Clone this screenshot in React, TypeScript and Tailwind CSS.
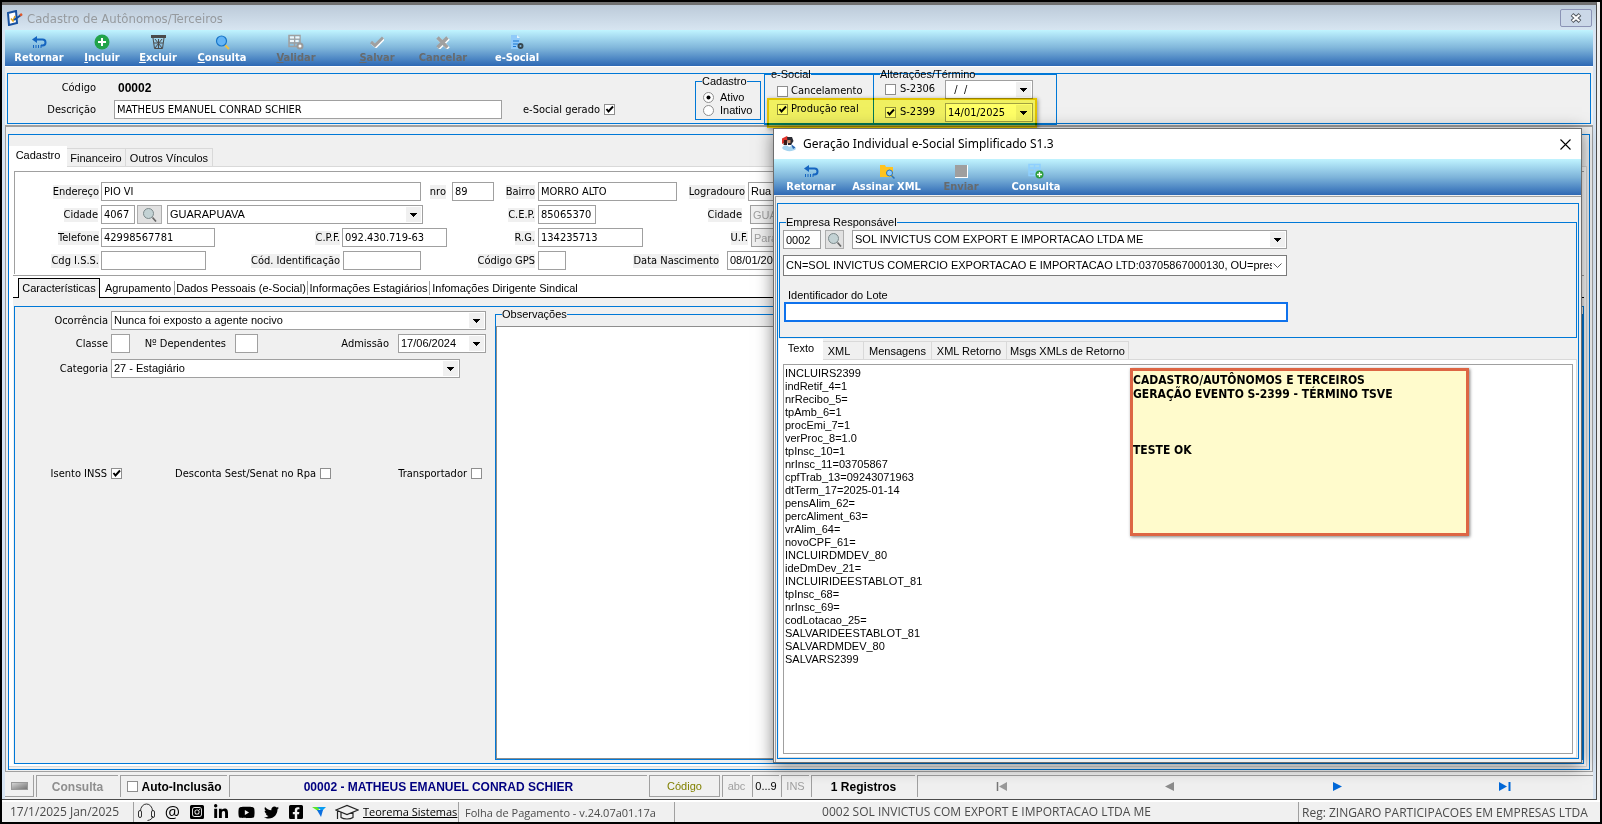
import type { ReactNode } from "react";
import { FaFacebookSquare, FaInstagramSquare, FaLinkedinIn, FaTwitter, FaYoutube } from "react-icons/fa";

const box = "h-[19px] shrink-0 border border-[#a0a0a0] bg-white px-[2px] leading-[15px] outline-none";
const ms = "font-['Liberation_Sans',Arial,sans-serif]";

const loteLines = [
  "INCLUIRS2399",
  "indRetif_4=1",
  "nrRecibo_5=",
  "tpAmb_6=1",
  "procEmi_7=1",
  "verProc_8=1.0",
  "tpInsc_10=1",
  "nrInsc_11=03705867",
  "cpfTrab_13=09243071963",
  "dtTerm_17=2025-01-14",
  "pensAlim_62=",
  "percAliment_63=",
  "vrAlim_64=",
  "novoCPF_61=",
  "INCLUIRDMDEV_80",
  "ideDmDev_21=",
  "INCLUIRIDEESTABLOT_81",
  "tpInsc_68=",
  "nrInsc_69=",
  "codLotacao_25=",
  "SALVARIDEESTABLOT_81",
  "SALVARDMDEV_80",
  "SALVARS2399",
];

function Arrow() {
  return (
    <svg className="h-[4px] w-[7px]" viewBox="0 0 7 4" shapeRendering="crispEdges">
      <path d="M0 0h7L3.5 4z" fill="#000" />
    </svg>
  );
}

function Label({ htmlFor, className, shaded, children }: { htmlFor: string; className: string; shaded?: boolean; children: ReactNode }) {
  return (
    <div className={`flex shrink-0 justify-end pt-px ${className}`}>
      <label htmlFor={htmlFor} className={`leading-[14px] whitespace-nowrap ${shaded ? "bg-[#f0f0f0]" : ""}`}>
        {children}
      </label>
    </div>
  );
}

function Text({ id, value, className }: { id: string; value?: string; className: string }) {
  return <input id={id} type="text" defaultValue={value} className={`${box} ${className}`} />;
}

function Combo({ id, value, className }: { id: string; value: string; className: string }) {
  return (
    <div className={`grid shrink-0 ${className}`}>
      <select id={id} className={`${box} w-full appearance-none [grid-area:1/1] ${ms}`}>
        <option>{value}</option>
      </select>
      <span className="pointer-events-none mr-[2px] flex h-[15px] w-[15px] items-center justify-center self-center justify-self-end bg-[#f0f0f0] [grid-area:1/1]">
        <Arrow />
      </span>
    </div>
  );
}

function DateBox({ id, value, className, clear }: { id: string; value: string; className: string; clear?: boolean }) {
  return (
    <div className={`flex h-[19px] shrink-0 items-center border border-[#a0a0a0] bg-white pr-px ${className}`}>
      <input id={id} type="text" defaultValue={value} className="w-full min-w-0 bg-transparent pl-[2px] leading-[15px] outline-none" />
      <button aria-label="Abrir calendário" className={`flex h-[15px] w-[15px] shrink-0 items-center justify-center ${clear ? "" : "bg-[#f0f0f0]"}`}>
        <Arrow />
      </button>
    </div>
  );
}

function Check({ id, checked, radio }: { id: string; checked?: boolean; radio?: boolean }) {
  return (
    <span className="grid size-[11px] shrink-0">
      <input
        id={id}
        type={radio ? "radio" : "checkbox"}
        name={radio ? "situacao" : id}
        defaultChecked={checked}
        className={`peer size-[11px] appearance-none border border-[#8e8e8e] bg-white [grid-area:1/1] ${radio ? "rounded-full" : ""}`}
      />
      <svg viewBox="0 0 11 11" className="pointer-events-none hidden size-[11px] [grid-area:1/1] peer-checked:block">
        {radio ? <circle cx="5.5" cy="5.5" r="2" /> : <path d="M2.5 5 4.5 7.5 9 2.5" fill="none" stroke="#000" strokeWidth="1.9" />}
      </svg>
    </span>
  );
}

function SearchButton({ className }: { className: string }) {
  return (
    <button aria-label="Pesquisar" className={`flex h-[19px] shrink-0 items-center justify-center border border-[#adadad] bg-[#e1e1e1] ${className}`}>
      <svg className="size-[15px] shrink-0" viewBox="0 0 15 15">
        <circle cx="6.5" cy="6.5" r="5" fill="#c3d2d4" stroke="#7d8a8c" />
        <path d="m10.500 10.500 3.500 4" stroke="#666" strokeWidth="1.600" />
      </svg>
    </button>
  );
}

function ReturnIcon() {
  return (
    <svg className="size-[15px]" viewBox="0 0 15 15">
      <path d="M3 4.5h7.5a3 3 0 0 1 0 6H9" fill="none" stroke="#1565c0" strokeWidth="2" />
      <path d="M5 1v7L0 4.5z" fill="#1565c0" />
      <path d="M1.5 10v3M4 10v3M6.5 10v3M9 10v3" stroke="#1565c0" />
    </svg>
  );
}

function GridIcon({ color, children }: { color: string; children: ReactNode }) {
  return (
    <svg className="size-[16px]" viewBox="0 0 16 16">
      <path d="M1 1.5h11v11H1zM1 5h11M1 9h11M6.5 1.5v11" fill="none" stroke={color} strokeWidth="1.5" />
      {children}
    </svg>
  );
}

function ToolButton({ label, icon, hot, disabled, className }: { label: string; icon: ReactNode; hot?: boolean; disabled?: boolean; className: string }) {
  return (
    <button
      disabled={disabled}
      className={`flex shrink-0 flex-col items-center gap-px pt-[4px] font-bold leading-[14px] ${disabled ? "text-[#666a6d]" : "text-white"} ${className}`}
    >
      <span className="flex h-[16px] items-center">{icon}</span>
      <span className="whitespace-nowrap">
        {hot ? <span className="underline">{label[0]}</span> : label[0]}
        {label.slice(1)}
      </span>
    </button>
  );
}

function Tab({ label, active, className }: { label: string; active?: boolean; className: string }) {
  return (
    <button
      role="tab"
      aria-selected={!!active}
      className={`shrink-0 whitespace-nowrap ${
        active ? "h-[21px] bg-white pb-[3px]" : "h-[19px] border border-l-0 border-[#d9d9d9] bg-[#f0f0f0] pt-px"
      } ${className}`}
    >
      {label}
    </button>
  );
}

function Header() {
  return (
    <section className="shrink-0 border-t border-white bg-[#f0f0f0] px-[2px] pt-[6px] pb-px">
      <div className="flex h-[51px] border border-[#0078d7]">
        <div className="flex w-[687px] shrink-0 flex-col gap-[3px] pt-[4px]">
          <div className="flex h-[19px] items-center">
            <Label htmlFor="codigo" className="w-[88px]">Código</Label>
            <output id="codigo" className={`ml-[22px] text-[12px] font-bold ${ms}`}>00002</output>
          </div>
          <div className="flex h-[19px] items-center">
            <Label htmlFor="descricao" className="mr-[18px] w-[88px]">Descrição</Label>
            <Text id="descricao" value="MATHEUS EMANUEL CONRAD SCHIER" className="w-[388px]" />
            <Label htmlFor="gerado" className="mr-[4px] w-[98px]">e-Social gerado</Label>
            <Check id="gerado" checked />
          </div>
        </div>
        <fieldset className="mt-px h-[45px] w-[66px] shrink-0 border border-[#0078d7]">
          <legend className={`ml-[6px] leading-[12px] ${ms}`}>Cadastro</legend>
          <div className={`flex flex-col gap-[2px] pt-[5px] pl-[7px] leading-[11px] ${ms}`}>
            <span className="flex items-center gap-[6px]">
              <Check id="ativo" radio checked />
              <label htmlFor="ativo">Ativo</label>
            </span>
            <span className="flex items-center gap-[6px]">
              <Check id="inativo" radio />
              <label htmlFor="inativo">Inativo</label>
            </span>
          </div>
        </fieldset>
        <fieldset className="-mt-[6px] -mb-px ml-[3px] h-[57px] w-[110px] shrink-0 border border-[#0078d7]">
          <legend className={`ml-[6px] leading-[12px] ${ms}`}>e-Social</legend>
          <div className="flex flex-col gap-[4px] pt-[4px] pl-[12px] leading-[14px]">
            <span className="flex items-center gap-[3px]">
              <Check id="cancelamento" />
              <label htmlFor="cancelamento">Cancelamento</label>
            </span>
            <span className="flex items-center gap-[3px]">
              <Check id="producao" checked />
              <label htmlFor="producao">Produção real</label>
            </span>
          </div>
        </fieldset>
        <fieldset className="-mt-[6px] -mb-px -ml-px h-[57px] w-[184px] shrink-0 border border-[#0078d7]">
          <legend className={`ml-[6px] leading-[12px] ${ms}`}>Alterações/Término</legend>
          <div className="flex flex-col gap-[4px] pl-[11px]">
            <span className="flex items-center">
              <Check id="s2306" />
              <label htmlFor="s2306" className="w-[49px] pl-[4px]">S-2306</label>
              <DateBox id="s2306data" value="  /  /" className="w-[88px] whitespace-pre" />
            </span>
            <span className="flex items-center">
              <Check id="s2399" checked />
              <label htmlFor="s2399" className="w-[49px] pl-[4px]">S-2399</label>
              <DateBox id="s2399data" value="14/01/2025" className="w-[88px]" />
            </span>
          </div>
        </fieldset>
      </div>
    </section>
  );
}

function Endereco() {
  return (
    <div className="flex flex-col gap-[4px] overflow-hidden border-t border-l border-[#a0a0a0] pt-[10px] pb-[4px]">
      <div className="flex items-center">
        <Label shaded htmlFor="endereco" className="w-[86px] pr-[2px]">Endereço</Label>
        <Text id="endereco" value="PIO VI" className="w-[320px]" />
        <Label shaded htmlFor="nro" className="w-[31px] pr-[6px]">nro</Label>
        <Text id="nro" value="89" className="w-[42px]" />
        <Label shaded htmlFor="bairro" className="w-[44px] pr-[3px]">Bairro</Label>
        <Text id="bairro" value="MORRO ALTO" className="w-[139px]" />
        <Label shaded htmlFor="logradouro" className="w-[71px] pr-[3px]">Logradouro</Label>
        <Combo id="logradouro" value="Rua" className="w-[180px]" />
      </div>
      <div className="flex items-center">
        <Label shaded htmlFor="cidade" className="w-[86px] pr-[3px]">Cidade</Label>
        <Text id="cidade" value="4067" className="w-[34px]" />
        <SearchButton className="ml-[2px] mr-[5px] w-[25px]" />
        <Combo id="cidadeNome" value="GUARAPUAVA" className="w-[256px]" />
        <Label shaded htmlFor="cep" className="w-[115px] pr-[3px]">C.E.P.</Label>
        <Text id="cep" value="85065370" className="w-[58px]" />
        <Label shaded htmlFor="cidadeNasc" className="w-[154px] pr-[8px]">Cidade</Label>
        <Text id="cidadeNasc" value="GUARAPUAVA" className={`w-[180px] !bg-[#f0f0f0] text-[#a0a0a0] ${ms}`} />
      </div>
      <div className="flex items-center">
        <Label shaded htmlFor="telefone" className="w-[86px] pr-[2px]">Telefone</Label>
        <Text id="telefone" value="42998567781" className="w-[114px]" />
        <Label shaded htmlFor="cpf" className="w-[127px] pr-[2px]">C.P.F.</Label>
        <Text id="cpf" value="092.430.719-63" className="w-[105px]" />
        <Label shaded htmlFor="rg" className="w-[91px] pr-[3px]">R.G.</Label>
        <Text id="rg" value="134235713" className="w-[105px]" />
        <Label shaded htmlFor="uf" className="w-[108px] pr-[3px]">U.F.</Label>
        <Text id="uf" value="Paraná" className={`w-[180px] !bg-[#f0f0f0] text-[#a0a0a0] ${ms}`} />
      </div>
      <div className="flex items-center">
        <Label shaded htmlFor="iss" className="w-[86px] pr-[2px]">Cdg I.S.S.</Label>
        <Text id="iss" className="w-[105px]" />
        <Label shaded htmlFor="ident" className="w-[137px] pr-[3px]">Cód. Identificação</Label>
        <Text id="ident" className="w-[78px]" />
        <Label shaded htmlFor="gps" className="w-[117px] pr-[3px]">Código GPS</Label>
        <Text id="gps" className="w-[28px]" />
        <Label shaded htmlFor="nascimento" className="w-[161px] pr-[8px]">Data Nascimento</Label>
        <DateBox id="nascimento" value="08/01/2004" className={`w-[100px] ${ms}`} />
      </div>
    </div>
  );
}

function Caracteristicas() {
  return (
    <div className="mt-[8px] ml-px flex min-h-0 flex-1 border border-[#0078d7]">
      <div className="flex w-[480px] shrink-0 flex-col pt-[4px]">
        <div className="flex items-center">
          <Label htmlFor="ocorrencia" className="w-[96px] pr-[3px]">Ocorrência</Label>
          <Combo id="ocorrencia" value="Nunca foi exposto a agente nocivo" className="w-[375px]" />
        </div>
        <div className="mt-[4px] flex items-center">
          <Label htmlFor="classe" className="w-[96px] pr-[3px]">Classe</Label>
          <Text id="classe" className="w-[19px]" />
          <Label htmlFor="dependentes" className="w-[105px] pr-[9px]">Nº Dependentes</Label>
          <Text id="dependentes" className="w-[23px]" />
          <Label htmlFor="admissao" className="w-[140px] pr-[9px]">Admissão</Label>
          <DateBox id="admissao" value="17/06/2024" className={`w-[88px] ${ms}`} />
        </div>
        <div className="mt-[6px] flex items-center">
          <Label htmlFor="categoria" className="w-[96px] pr-[3px]">Categoria</Label>
          <Combo id="categoria" value="27 - Estagiário" className="w-[349px]" />
        </div>
        <div className="mt-[88px] flex items-center">
          <Label htmlFor="isento" className="w-[96px] pr-[4px]">Isento INSS</Label>
          <Check id="isento" checked />
          <Label htmlFor="desconta" className="w-[198px] pr-[4px]">Desconta Sest/Senat no Rpa</Label>
          <Check id="desconta" />
          <Label htmlFor="transportador" className="w-[140px] pr-[4px]">Transportador</Label>
          <Check id="transportador" />
        </div>
      </div>
      <fieldset className="mb-[3px] flex min-w-0 flex-1 flex-col border border-[#0078d7]">
        <legend className={`ml-[6px] h-[14px] leading-[14px] ${ms}`}>Observações</legend>
        <textarea aria-label="Observações" className="mt-[5px] min-h-0 w-full flex-1 resize-none border border-[#8e8e8e] bg-white outline-none" />
      </fieldset>
    </div>
  );
}

function RecordBar() {
  const cell = "flex h-[22px] shrink-0 items-center justify-center border-t border-l border-[#a0a0a0]";
  return (
    <footer className={`flex shrink-0 items-center gap-[2px] bg-[#f0f0f0] pt-[3px] pb-[2px] text-[12px] ${ms}`}>
      <button aria-label="Menu" className="flex h-[22px] w-[29px] shrink-0 items-center justify-center border-r border-b border-[#a0a0a0]">
        <span className="h-[8px] w-[17px] border border-[#999] bg-linear-to-br from-[#d4d4d4] to-[#777]" />
      </button>
      <span className={`${cell} w-[82px] font-bold text-[#8e8e8e]`}>Consulta</span>
      <span className={`${cell} w-[107px] gap-[4px] font-bold`}>
        <Check id="auto" />
        <label htmlFor="auto">Auto-Inclusão</label>
      </span>
      <span className={`${cell} w-[418px] font-bold text-[#000080]`}>00002 - MATHEUS EMANUEL CONRAD SCHIER</span>
      <button className="h-[22px] w-[71px] shrink-0 border border-[#a0a0a0] text-[11px] text-[#808000]">Código</button>
      <span className={`${cell} w-[28px] text-[11px] text-[#a0a0a0]`}>abc</span>
      <span className={`${cell} w-[27px] text-[11px]`}>0...9</span>
      <span className={`${cell} w-[28px] text-[11px] text-[#a0a0a0]`}>INS</span>
      <span className={`${cell} w-[104px] font-bold`}>1 Registros</span>
      <div className="grid h-[22px] flex-1 grid-cols-4 border-t border-l border-[#a0a0a0] pr-[4px]">
        <button aria-label="Primeiro" disabled className="flex items-center justify-center">
          <svg className="h-[9px] w-[12px]" viewBox="0 0 12 9"><path d="M1.5 0v9" stroke="#777" strokeWidth="1.5" /><path d="M11 0v9L3 4.5z" fill="#999" /></svg>
        </button>
        <button aria-label="Anterior" disabled className="flex items-center justify-center">
          <svg className="h-[9px] w-[9px]" viewBox="0 0 9 9"><path d="M9 0v9L0 4.5z" fill="#8c8c8c" /></svg>
        </button>
        <button aria-label="Próximo" className="flex items-center justify-center">
          <svg className="h-[9px] w-[9px]" viewBox="0 0 9 9"><path d="M0 0v9l9-4.5z" fill="#0068d8" /></svg>
        </button>
        <button aria-label="Último" className="flex items-center justify-center">
          <svg className="h-[9px] w-[12px]" viewBox="0 0 12 9"><path d="M0 0v9l8-4.5z" fill="#0068d8" /><path d="M10.5 0v9" stroke="#0068d8" strokeWidth="2" /></svg>
        </button>
      </div>
    </footer>
  );
}

function StatusBar() {
  return (
    <footer className="flex h-[22px] shrink-0 items-center border-t-2 border-white bg-[#f0f0f0] font-['Open_Sans','Noto_Sans',sans-serif] text-[12px] text-[#4a4a4a]">
      <span className="w-[131px] shrink-0 pl-[8px]">17/1/2025 Jan/2025</span>
      <span className="flex h-full w-[228px] shrink-0 items-center justify-between border-l border-[#a0a0a0] pr-[2px] pl-[3px] text-black">
        <a href="#suporte" aria-label="Suporte">
          <svg className="size-[19px]" viewBox="0 0 19 19" fill="none" stroke="#333">
            <path d="M3.5 8a6 7 0 0 1 12 0M15.5 13c0 3-2 4-5 4.500" />
            <rect x="1.500" y="7.500" width="3" height="7" rx="1.500" />
            <rect x="14.500" y="7.500" width="3" height="7" rx="1.500" />
          </svg>
        </a>
        <a href="#email" className="text-[17px] leading-[18px]">@</a>
        <a href="#instagram" aria-label="Instagram"><FaInstagramSquare size={16} /></a>
        <a href="#linkedin" aria-label="LinkedIn"><FaLinkedinIn size={16} /></a>
        <a href="#youtube" aria-label="YouTube"><FaYoutube size={17} /></a>
        <a href="#twitter" aria-label="Twitter"><FaTwitter size={15} /></a>
        <a href="#facebook" aria-label="Facebook"><FaFacebookSquare size={16} /></a>
        <a href="#remoto" aria-label="Acesso remoto">
          <svg className="size-[14px]" viewBox="0 0 14 14">
            <path d="M0 2h8L6 6z" fill="#5be52a" />
            <path d="M5 2h9l-4 4z" fill="#0a9cf0" />
            <path d="M5 5h6l-2 7z" fill="#0b6fe0" />
          </svg>
        </a>
        <a href="#treinamento" aria-label="Treinamento">
          <svg className="h-[17px] w-[24px]" viewBox="0 0 24 17" fill="none" stroke="#222" strokeWidth="1.200">
            <path d="M1 6 12 1.500 23 6 12 10.500zM6 8.500v5c3 2 9 2 12 0v-5M2.500 7v8" />
          </svg>
        </a>
      </span>
      <a href="#teorema" className="w-[97px] shrink-0 pl-[2px] text-[11px] leading-[22px] text-black underline">Teorema Sistemas</a>
      <span className="h-full w-[216px] shrink-0 border-l border-[#a0a0a0] pl-[6px] text-[11px] leading-[22px]">Folha de Pagamento - v.24.07a01.17a</span>
      <span className="h-full flex-1 border-l border-[#a0a0a0] text-center leading-[20px]">0002 SOL INVICTUS COM EXPORT E IMPORTACAO LTDA ME</span>
      <span className="h-full w-[302px] shrink-0 border-l border-[#a0a0a0] pl-[3px] leading-[22px] whitespace-nowrap">Reg: ZINGARO PARTICIPACOES EM EMPRESAS LTDA</span>
    </footer>
  );
}

function Dialog() {
  return (
    <div
      role="dialog"
      aria-labelledby="dialogTitle"
      className="absolute top-[128px] right-[20px] bottom-[61px] left-[773px] flex flex-col border border-[#6e6e6e] bg-[#f0f0f0] shadow-[0_3px_16px_rgba(0,0,0,0.5)]"
    >
      <div className="flex h-[30px] shrink-0 items-center bg-white pr-[10px] pl-[7px]">
        <svg className="size-[16px]" viewBox="0 0 16 16">
          <path d="M1 2.500 6 0l2 3-3 3-4 2z" fill="#e0322a" />
          <path d="M6 1h5l1.500 4L10 9H7z" fill="#2b2b33" />
          <path d="M3 4h3v5H2.500z" fill="#3a1c1a" />
          <path d="M6.500 4h3v3h-3z" fill="#c98a68" />
          <path d="M1 12c2-4 5-3 7-1 3-2 6-1 7 2-3 3-11 3-14-1z" fill="#a5d3ee" />
          <path d="m10 8 4.500 3.500L12 13z" fill="#2a66b0" />
        </svg>
        <h2 id="dialogTitle" className="ml-[6px] flex-1 font-['Noto_Sans','Open_Sans',sans-serif] text-[12px]">
          Geração Individual e-Social Simplificado S1.3
        </h2>
        <button aria-label="Fechar">
          <svg className="size-[11px]" viewBox="0 0 11 11"><path d="m.5.500 10 10m0-10-10 10" stroke="#000" strokeWidth="1.100" /></svg>
        </button>
      </div>
      <div className="flex h-[36px] shrink-0 bg-linear-to-b from-[#c0f4ff] via-[#7fb5da] to-[#2d68b4]">
        <ToolButton label="Retornar" icon={<ReturnIcon />} className="ml-[6px] w-[62px]" />
        <ToolButton
          label="Assinar XML"
          className="ml-[3px] w-[83px]"
          icon={
            <svg className="h-[15px] w-[16px]" viewBox="0 0 16 15">
              <path d="M1 1h5l1 2h7v10H1z" fill="#ffc31f" />
              <circle cx="10.500" cy="9" r="3" fill="#8ccbff" stroke="#2a72b8" />
              <path d="m12.500 11.500 3 3" stroke="#2a72b8" strokeWidth="1.500" />
            </svg>
          }
        />
        <ToolButton label="Enviar" disabled className="ml-[3px] w-[60px]" icon={<span className="size-[13px] border-r border-b border-white bg-[#9f9f9f]" />} />
        <ToolButton
          label="Consulta"
          className="ml-[10px] w-[70px]"
          icon={
            <GridIcon color="#8fd0ff">
              <circle cx="11.500" cy="11.500" r="4" fill="#2e9e3c" />
              <path d="M9 11.500h5M11.500 9v5" stroke="#fff" strokeWidth="1.300" />
            </GridIcon>
          }
        />
      </div>
      <div className="mt-px ml-px flex min-h-0 flex-1 flex-col border-t border-l border-[#a0a0a0] pt-[6px] pr-[2px] pb-[3px] pl-px">
        <div className="flex min-h-0 flex-1 flex-col border border-[#0078d7] px-px pt-[12px]">
          <fieldset className="shrink-0 border border-[#0078d7]">
            <legend className={`ml-[6px] leading-[12px] ${ms}`}>Empresa Responsável</legend>
            <div className="flex pt-[2px] pl-[3px]">
              <Text id="empresa" value="0002" className={`w-[38px] ${ms}`} />
              <SearchButton className="mr-[8px] ml-[4px] w-[19px]" />
              <Combo id="empresaNome" value="SOL INVICTUS COM EXPORT E IMPORTACAO LTDA ME" className="w-[435px]" />
            </div>
            <div className="mt-[6px] ml-[3px] grid w-[504px]">
              <select
                aria-label="Certificado"
                className={`h-[21px] w-full appearance-none border border-[#7a7a7a] bg-white pr-[14px] pl-[2px] [grid-area:1/1] ${ms}`}
              >
                <option>CN=SOL INVICTUS COMERCIO EXPORTACAO E IMPORTACAO LTD:03705867000130, OU=prese</option>
              </select>
              <svg className="pointer-events-none mr-[5px] h-[5px] w-[9px] self-center justify-self-end [grid-area:1/1]" viewBox="0 0 9 5">
                <path d="m.5.500 4 4 4-4" fill="none" stroke="#555" />
              </svg>
            </div>
            <label htmlFor="lote" className={`mt-[13px] ml-[8px] block leading-[13px] ${ms}`}>Identificador do Lote</label>
            <input id="lote" type="text" className="mb-[15px] ml-[4px] block h-[20px] w-[504px] border-2 border-[#0f72ec] bg-white outline-none" />
          </fieldset>
          <div role="tablist" className={`mt-px flex shrink-0 items-end ${ms}`}>
            <Tab label="Texto" active className="w-[44px]" />
            <Tab label="XML" className="w-[41px] pr-[8px]" />
            <Tab label="Mensagens" className="w-[68px]" />
            <Tab label="XML Retorno" className="w-[75px]" />
            <Tab label="Msgs XMLs de Retorno" className="w-[122px]" />
            <span className="flex-1 border-b border-[#d9d9d9]" />
          </div>
          <div className="flex min-h-0 flex-1 flex-col border-r border-b border-[#d9d9d9] bg-white pt-[4px] pr-[3px] pb-[3px] pl-[4px]">
            <div className="relative flex min-h-0 flex-1 border border-[#a0a0a0]">
              <textarea
                aria-label="Texto"
                readOnly
                value={loteLines.join("\n")}
                className={`flex-1 resize-none px-px pt-[2px] leading-[13px] outline-none ${ms}`}
              />
              <div className="absolute top-[3px] left-[346px] h-[168px] w-[339px] border-[3px] border-[#dd6644] bg-[#fffbcc] pt-[2px] text-[12px] font-bold leading-[14px] whitespace-pre-line shadow-[1px_1px_3px_rgba(0,0,0,0.5)]">
                {"CADASTRO/AUTÔNOMOS E TERCEIROS\nGERAÇÃO EVENTO S-2399 - TÉRMINO TSVE\n\n\n\nTESTE OK"}
              </div>
            </div>
          </div>
        </div>
      </div>
    </div>
  );
}

export default function App() {
  return (
    <main className="relative h-screen overflow-hidden bg-black p-[2px] font-['DejaVu_Sans_Condensed','DejaVu_Sans',Tahoma,sans-serif] text-[11px] text-black">
      <div className="flex h-full flex-col bg-[#f0f0f0]">
        <div className="mr-[3px] flex min-h-0 flex-1 flex-col border-t-[3px] border-r border-b border-[#4c4c4c] border-t-[#707070] bg-[#d7e4f2]">
          <div className="flex h-[25px] shrink-0 items-center bg-linear-to-b from-[#bccad9] to-[#d7e5f1] pr-[4px] pl-[5px]">
            <svg className="size-[16px]" viewBox="0 0 16 16">
              <path d="m1 3 8-2 1 12-8 2z" fill="#fff" stroke="#1550a0" strokeWidth="2" />
              <path d="M4 8.500 6 11l2-5" fill="none" stroke="#e0a31c" strokeWidth="1.500" />
              <path d="m7 10 7-5" stroke="#1550a0" strokeWidth="2" />
              <path d="m13 5.500 2-1.500" stroke="#e0582a" strokeWidth="2.500" />
            </svg>
            <h1 className="ml-[4px] flex-1 pt-[3px] text-[13px] text-[#969a9e]">Cadastro de Autônomos/Terceiros</h1>
            <button aria-label="Fechar" className="flex h-[18px] w-[32px] items-center justify-center rounded-[2px] border border-[#8b93b5] bg-[#cbd8e8]">
              <svg className="h-[10px] w-[12px]" viewBox="0 0 12 10">
                <path d="m2 1.500 8 7m0-7-8 7" stroke="#50565e" strokeWidth="4" />
                <path d="m2.500 2 7 6m0-6-7 6" stroke="#fff" strokeWidth="2" />
              </svg>
            </button>
          </div>
          <div className="flex min-h-0 flex-1 flex-col px-[3px]">
            <div className="flex h-[36px] shrink-0 bg-linear-to-b from-[#c0f4ff] via-[#7fb5da] to-[#2d68b4]">
              <ToolButton label="Retornar" icon={<ReturnIcon />} className="ml-[3px] w-[62px]" />
              <ToolButton
                label="Incluir"
                hot
                className="ml-[4px] w-[56px]"
                icon={
                  <svg className="size-[16px]" viewBox="0 0 16 16">
                    <circle cx="8" cy="8" r="7.500" fill="#21a34a" />
                    <path d="M4 8h8M8 4v8" stroke="#fff" strokeWidth="2" />
                  </svg>
                }
              />
              <ToolButton
                label="Excluir"
                hot
                className="w-[56px]"
                icon={
                  <svg className="h-[14px] w-[15px]" viewBox="0 0 15 14" fill="none" stroke="#4a4a4a">
                    <path d="M0 1.500h15" strokeWidth="3" />
                    <path d="m2 3 1.500 10.500h8L13 3M4 4l7 9M11 4l-7 9M7.500 4v9M3 8h9" />
                  </svg>
                }
              />
              <ToolButton
                label="Consulta"
                hot
                className="ml-[4px] w-[64px]"
                icon={
                  <svg className="size-[15px]" viewBox="0 0 15 15">
                    <path d="m10 10 4 4" stroke="#f0c040" strokeWidth="2" />
                    <circle cx="6.500" cy="6" r="5" fill="#64b5f6" stroke="#1976c8" strokeWidth="1.200" />
                  </svg>
                }
              />
              <ToolButton
                label="Validar"
                hot
                disabled
                className="ml-[12px] w-[60px]"
                icon={
                  <GridIcon color="#a0a0a0">
                    <path d="M2 2.500h4v2H2zM7.500 2.500h4v2h-4zM2 6h4v2H2zM7.500 6h3v2h-3z" fill="#eef6fa" />
                    <circle cx="12" cy="12" r="2.500" fill="#fff" stroke="#999" strokeWidth="2" />
                  </GridIcon>
                }
              />
              <ToolButton
                label="Salvar"
                hot
                disabled
                className="ml-[22px] w-[58px]"
                icon={
                  <svg className="h-[12px] w-[14px]" viewBox="0 0 14 12" fill="none" strokeWidth="3">
                    <path d="m2 7 4 3.500 8-8" stroke="#fff" />
                    <path d="m1 6 4 3.500 8-8" stroke="#a0a0a0" />
                  </svg>
                }
              />
              <ToolButton
                label="Cancelar"
                disabled
                className="ml-[4px] w-[66px]"
                icon={
                  <svg className="h-[13px] w-[14px]" viewBox="0 0 14 13" strokeWidth="3.500">
                    <path d="m2.500 2.500 10 10m0-10-10 10" stroke="#fff" />
                    <path d="m1.500 1.500 10 10m0-10-10 10" stroke="#a0a0a0" />
                  </svg>
                }
              />
              <ToolButton
                label="e-Social"
                className="ml-[12px] w-[58px]"
                icon={
                  <svg className="h-[15px] w-[14px]" viewBox="0 0 14 15">
                    <path d="M1 0h6l3 3v11H1z" fill="#90caf9" />
                    <path d="M7 0v3h3z" fill="#e1f5fe" />
                    <path d="M3 6h6M3 9h5M3 11.500h3" stroke="#1976d2" strokeWidth="1.200" />
                    <circle cx="10.500" cy="11" r="2" fill="none" stroke="#37474f" strokeWidth="2" />
                  </svg>
                }
              />
            </div>
            <Header />
            <section className="flex min-h-0 flex-1 flex-col border-x border-t-2 border-b border-[#a0a0a0] bg-[#f0f0f0] px-px">
              <div className="mx-px mt-[7px] mb-px flex min-h-0 flex-1 flex-col border border-[#0078d7] pr-[2px] pb-[2px]">
                <div role="tablist" className={`mt-[11px] flex shrink-0 items-end ${ms}`}>
                  <Tab label="Cadastro" active className="w-[58px]" />
                  <Tab label="Financeiro" className="w-[59px]" />
                  <Tab label="Outros Vínculos" className="w-[87px]" />
                  <span className="flex-1 border-b border-[#d9d9d9]" />
                </div>
                <div className="flex min-h-0 flex-1 flex-col border-r border-b border-[#d9d9d9] bg-white pt-[4px] pr-[2px] pl-[4px]">
                  <div className="shrink-0 pl-px">
                    <Endereco />
                  </div>
                  <div role="tablist" className={`mt-px flex h-[23px] shrink-0 items-end border-t border-[#a0a0a0] ${ms}`}>
                    <span className="w-[5px] border-b border-black" />
                    <button role="tab" aria-selected className="h-[20px] w-[82px] border border-b-0 border-black bg-[#f0f0f0]">Características</button>
                    <div className="flex h-[20px] flex-1 items-center border-b border-black pl-[2px] *:h-[14px] *:shrink-0 *:leading-[14px] *:whitespace-nowrap">
                      <button role="tab" className="w-[73px] border-r border-[#a0a0a0]">Agrupamento</button>
                      <button role="tab" className="w-[133px] border-r border-[#a0a0a0]">Dados Pessoais (e-Social)</button>
                      <button role="tab" className="w-[122px] border-r border-[#a0a0a0]">Informações Estagiários</button>
                      <button role="tab" className="w-[150px]">Infomações Dirigente Sindical</button>
                    </div>
                  </div>
                  <div className="mb-[2px] flex min-h-0 flex-1 flex-col bg-[#f0f0f0]">
                    <Caracteristicas />
                  </div>
                </div>
              </div>
            </section>
            <RecordBar />
          </div>
        </div>
        <StatusBar />
      </div>
      <div className="pointer-events-none absolute top-[98px] left-[767px] h-[30px] w-[270px] border-2 border-[#f0d000] bg-[#ffff66] mix-blend-multiply shadow-[1px_1px_4px_rgba(0,0,0,0.4)]" />
      <Dialog />
    </main>
  );
}
